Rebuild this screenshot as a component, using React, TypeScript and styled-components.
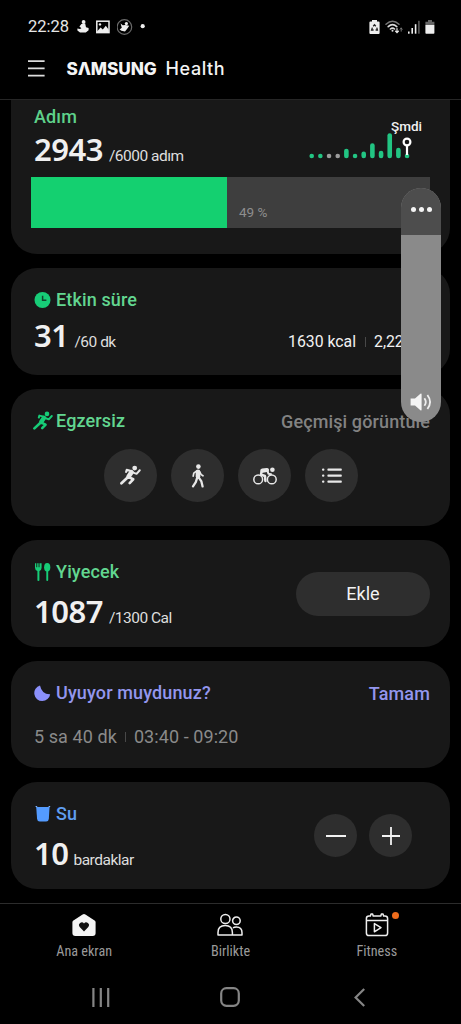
import React from 'react';
import styled, { createGlobalStyle } from 'styled-components';

const GlobalStyle = createGlobalStyle`
  * { box-sizing: border-box; }
  body { margin: 0; background: #000; }
  svg { display: block; flex: none; }
`;

const Screen = styled.div`
  position: relative;
  width: 461px;
  height: 1024px;
  display: flex;
  flex-direction: column;
  overflow: hidden;
  background: #000;
  color: #f2f2f2;
  font-family: Roboto, "Liberation Sans", sans-serif;
`;

const StatusBar = styled.div`
  height: 40px;
  padding: 13px 26px 0 28px;
  display: flex;
  justify-content: space-between;
`;

const StatusGroup = styled.div<{ $gap: number }>`
  height: 27px;
  display: flex;
  align-items: center;
  gap: ${(p) => p.$gap}px;
`;

const Clock = styled.span`
  font-size: 16.5px;
  line-height: 27px;
  color: #e6e6e6;
  margin-right: 1px;
`;

const Header = styled.header`
  height: 60px;
  flex: none;
  padding: 0 28px 2px;
  display: flex;
  align-items: center;
  border-bottom: 1px solid #262626;
`;

const Brand = styled.h1`
  margin: 0 0 0 21.5px;
  display: flex;
  gap: 9px;
  line-height: 24px;
  color: #f4f4f4;
`;

const BrandName = styled.span`
  font: 800 17.2px/24px Inter, sans-serif;
  letter-spacing: -0.1px;
`;

const BrandProduct = styled.span`
  font: 500 18px/24px Inter, sans-serif;
  letter-spacing: 0.6px;
`;

const Feed = styled.main`
  height: 803px;
  flex: none;
  padding: 0 11px;
  display: flex;
  flex-direction: column;
  gap: 14px;
`;

const Card = styled.section<{ $height: number; $first?: boolean }>`
  height: ${(p) => p.$height}px;
  flex: none;
  padding: ${(p) => (p.$first ? '5px 20px 0' : '20px 20px 0 23px')};
  border-radius: ${(p) => (p.$first ? '0 0 26px 26px' : '26px')};
  background: #181818;
`;

const Row = styled.div`
  display: flex;
  justify-content: space-between;
  align-items: flex-start;
`;

const StepsSummary = styled.div`
  padding-left: 3px;
`;

const Title = styled.h2<{ $color: string }>`
  margin: 0;
  display: flex;
  align-items: center;
  gap: 5px;
  font-size: 18px;
  font-weight: 500;
  line-height: 24px;
  letter-spacing: 0.13px;
  color: ${(p) => p.$color};
`;

const TitleIcon = styled.span`
  width: 17px;
  height: 22px;
  display: flex;
  align-items: center;
  justify-content: center;
  color: #17cc77;
`;

const Metric = styled.div<{ $top: number; $gap?: number }>`
  margin-top: ${(p) => p.$top}px;
  height: 36px;
  display: flex;
  align-items: baseline;
  gap: ${(p) => p.$gap ?? 6}px;
`;

const MetricValue = styled.span`
  font: 560 31px/36px "Noto Sans", sans-serif;
  letter-spacing: -0.5px;
  color: #f0f0f0;
`;

const MetricUnit = styled.span`
  font-size: 15.5px;
  letter-spacing: -0.5px;
  color: #dedede;
`;

const HourlyChart = styled.div`
  width: 121px;
  margin-top: 14px;
  display: flex;
  flex-direction: column;
`;

const ChartLabel = styled.span`
  align-self: flex-end;
  margin-right: 8px;
  font-size: 13.5px;
  font-weight: 500;
  line-height: 14px;
  color: #f2f2f2;
`;

const Progress = styled.div`
  margin-top: 10px;
  height: 51px;
  display: flex;
  background: #3e3e3e;
`;

const ProgressFill = styled.div`
  width: 196px;
  background: #14d070;
`;

const ProgressLabel = styled.span`
  margin: 26px 0 0 12px;
  font-size: 13.5px;
  line-height: 18px;
  color: #8e8e8e;
`;

const ActiveStats = styled.div`
  margin-top: 20px;
  display: flex;
  align-items: center;
  font-size: 15.8px;
  line-height: 20px;
  color: #f2f2f2;
`;

const Distance = styled.span`
  width: 56px;
`;

const Divider = styled.span<{ $margin: string }>`
  width: 1px;
  height: 10px;
  margin: ${(p) => p.$margin};
  background: #484848;
`;

const TextAction = styled.button<{ $color: string }>`
  margin: 1px 0 0;
  padding: 0;
  border: 0;
  background: none;
  font: 500 18px/24px Roboto, sans-serif;
  letter-spacing: 0.12px;
  color: ${(p) => p.$color};
`;

const ExerciseRow = styled.div`
  margin: 15px 0 0 70px;
  display: flex;
  gap: 14px;
`;

const RoundButton = styled.button<{ $size: number }>`
  width: ${(p) => p.$size}px;
  height: ${(p) => p.$size}px;
  padding: 0;
  border: 0;
  border-radius: 50%;
  display: flex;
  align-items: center;
  justify-content: center;
  background: #2e2e2e;
  color: #e8e8e8;
`;

const PillButton = styled.button`
  width: 134px;
  height: 44px;
  margin-top: 12px;
  padding: 0;
  border: 0;
  border-radius: 22px;
  background: #2e2e2e;
  color: #f2f2f2;
  font: 400 18px/42px Roboto, sans-serif;
`;

const SleepDetails = styled.div`
  margin-top: 19px;
  display: flex;
  align-items: center;
  font-size: 18px;
  line-height: 24px;
  letter-spacing: 0.08px;
  color: #8a8a8a;
`;

const Stepper = styled.div`
  margin: 12px 18px 0 0;
  display: flex;
  gap: 12px;
`;

const TabBar = styled.nav`
  height: 67px;
  flex: none;
  padding: 0 11px;
  display: grid;
  grid-template-columns: repeat(3, 1fr);
  border-top: 1px solid #2c2c2c;
`;

const Tab = styled.div`
  display: flex;
  flex-direction: column;
  align-items: center;
  padding-top: 9px;
`;

const TabIcon = styled.div`
  position: relative;
`;

const TabLabel = styled.span`
  margin-top: 5px;
  font-size: 14.2px;
  line-height: 18px;
  font-stretch: 75%;
  color: #9a9a9a;
`;

const Badge = styled.span`
  position: absolute;
  top: -1px;
  right: -10px;
  width: 7px;
  height: 7px;
  border-radius: 50%;
  background: #ee6c1c;
`;

const SystemNav = styled.div`
  height: 54px;
  padding: 0 36px;
  display: grid;
  grid-template-columns: repeat(3, 1fr);
  justify-items: center;
  align-items: center;
`;

const VolumePanel = styled.div`
  position: absolute;
  left: 401px;
  top: 188px;
  width: 40px;
  height: 234px;
  border-radius: 20px;
  overflow: hidden;
  display: flex;
  flex-direction: column;
  background: #8a8a8a;
`;

const VolumeMenu = styled.div`
  height: 47px;
  display: flex;
  align-items: center;
  justify-content: center;
  gap: 3px;
  padding-bottom: 5px;
  background: #4d4d4d;
`;

const MenuDot = styled.span`
  width: 5px;
  height: 5px;
  border-radius: 50%;
  background: #f4f4f4;
`;

const VolumeTrack = styled.div`
  flex: 1;
  display: flex;
  align-items: flex-end;
  justify-content: center;
  padding-bottom: 11px;
`;

const RunnerIcon = ({ size }: { size: number }) => (
  <svg width={size} height={size} viewBox="0 0 20 20" fill="none" stroke="currentColor" strokeLinecap="round" strokeLinejoin="round">
    <circle cx="14" cy="2.9" r="2.3" fill="currentColor" stroke="none" />
    <path d="M11 6.8 8.2 11" strokeWidth="4.4" />
    <path d="M9.8 5.4 6.4 4.6 5.8 6.6" strokeWidth="2" />
    <path d="M12 7 15.8 8.4 18.8 5" strokeWidth="1.9" />
    <path d="M7.2 12 1.4 17.4" strokeWidth="2.6" />
    <path d="M8.8 11.8 12.6 13.6 9.2 17.2" strokeWidth="2.5" />
  </svg>
);

const WalkerIcon = () => (
  <svg width="14" height="24" viewBox="0 0 14 24" fill="none" stroke="currentColor" strokeLinecap="round" strokeLinejoin="round">
    <circle cx="7.4" cy="2.6" r="2.3" fill="currentColor" stroke="none" />
    <path d="M7 7.8V12.6" strokeWidth="4.6" />
    <path d="M5.4 7.2 2.8 9.2 2.2 12.2M8.6 7.6 10.2 10.6 12 11.8" strokeWidth="1.7" />
    <path d="M6.2 13.6 4.8 18.2 2 22.4M8 13.8 10.4 17.4 11.6 22.4" strokeWidth="2.3" />
  </svg>
);

const CyclistIcon = () => (
  <svg width="24" height="18" viewBox="0 0 24 18" fill="none" stroke="currentColor" strokeLinecap="round" strokeLinejoin="round">
    <circle cx="5.2" cy="12.4" r="4.4" strokeWidth="1.5" />
    <circle cx="18.8" cy="12.4" r="4.4" strokeWidth="1.5" />
    <circle cx="19.4" cy="2.7" r="2.3" fill="currentColor" stroke="none" />
    <path d="M14 3 9.4 3.6" strokeWidth="4.2" />
    <path d="M8.6 4.4 8 7.6 12 9 12.4 14" strokeWidth="2.5" />
    <path d="M14.6 4 15.4 6.8 18 7.2" strokeWidth="2" />
  </svg>
);

const ListIcon = () => (
  <svg width="20" height="16" viewBox="0 0 20 16" fill="currentColor">
    {[0.4, 6.4, 12.4].map((y) => (
      <React.Fragment key={y}>
        <rect x="0" y={y} width="2.4" height="2.4" rx="1" />
        <rect x="5.4" y={y} width="14.4" height="2.4" rx="0.8" />
      </React.Fragment>
    ))}
  </svg>
);

const BARS = [4.6, 4.6, 4.6, 4.6, 9.5, 4.6, 6.8, 15, 7.6, 25, 10.6, 4.6];

const HourlyBars = () => (
  <svg width="121" height="30" viewBox="0 0 121 30">
    {BARS.map((h, i) => (
      <rect
        key={i}
        x={0.4 + i * 8.67}
        y={25.3 - h}
        width="4.6"
        height={h}
        rx="2.3"
        fill={i === 2 || i === 3 ? '#9c9c9c' : '#22c583'}
      />
    ))}
    <path d="M98 12.5V22" stroke="#fff" strokeWidth="2.2" />
    <circle cx="98" cy="9" r="3.4" fill="#181818" stroke="#fff" strokeWidth="2.2" />
  </svg>
);

export default function App() {
  return (
    <>
      <GlobalStyle />
      <Screen>
        <StatusBar>
          <StatusGroup $gap={7}>
            <Clock>22:28</Clock>
            <svg width="12" height="13" viewBox="0 0 12 13" fill="#eee">
              <circle cx="6.6" cy="2" r="1.9" />
              <path d="M4.4 4 8.2 3.6 9 7.2 11.6 8v2.2L8.8 12.6H3L.4 10.4v-2l2.6.6 1.4-.8L2.4 6.4z" />
            </svg>
            <svg width="14" height="14" viewBox="0 0 14 14" fill="none">
              <rect x=".8" y="1.2" width="12.2" height="11.4" stroke="#eee" strokeWidth="1.5" />
              <path d="M1 11.6 4.6 7.4l2.2 2 3-3.6 3 4V12.4H1z" fill="#eee" />
              <circle cx="4" cy="4.4" r="1.2" fill="#eee" />
            </svg>
            <svg width="16" height="16" viewBox="0 0 16 16" fill="none">
              <circle cx="7.4" cy="8" r="7.3" stroke="#6a6a6a" strokeWidth="1.2" />
              <circle cx="9.4" cy="4.6" r="1.6" fill="#eee" />
              <path d="M3.6 4.4 5.8 6.2 8.2 6 12.2 6.8 10.4 9.6 8 12.6 4.4 11.8 2.6 10.4 4.8 8.8z" fill="#eee" />
            </svg>
            <svg width="5" height="5" viewBox="0 0 5 5">
              <circle cx="2.7" cy="2.2" r="2.1" fill="#eee" />
            </svg>
          </StatusGroup>
          <StatusGroup $gap={5}>
            <svg width="11" height="14" viewBox="0 0 11 14">
              <path d="M3 0h5v1.6h1.6Q10.6 1.6 10.6 2.6V13q0 1-1 1H1.4q-1 0-1-1V2.6q0-1 1-1H3z" fill="#eee" />
              <path d="M4.2 6.2 5.5 4.8 6.8 6.2M7.8 7.6 8.4 10H6.6M4.6 10H2.6L3.4 7.6" fill="none" stroke="#222" strokeWidth="1.3" />
            </svg>
            <svg width="18" height="14" viewBox="0 0 18 14" fill="none" strokeLinecap="round">
              <path d="M1 4.2Q7.5-1.8 14 4.2" stroke="#777" strokeWidth="1.5" />
              <path d="M3.2 6.7Q7.5 2.6 11.8 6.7" stroke="#ddd" strokeWidth="1.6" />
              <path d="M5.4 9Q7.5 7.2 9.6 9" stroke="#ddd" strokeWidth="1.6" />
              <circle cx="7.5" cy="10.8" r="1" fill="#ddd" />
              <path d="M12 8.6v4m-1.5-1.5L12 12.6l1.5-1.5" stroke="#eee" strokeWidth="1.2" />
              <path d="M16.2 11.2V8m-1 1.2 1-1.2 1 1.2" stroke="#777" strokeWidth="1" />
            </svg>
            <svg width="12" height="14" viewBox="0 0 12 14">
              <rect x="0" y="11.5" width="1.6" height="2.2" fill="#eee" />
              <rect x="3.4" y="8" width="1.6" height="5.7" fill="#eee" />
              <rect x="6.8" y="4.2" width="1.6" height="9.5" fill="#eee" />
              <rect x="10.2" y=".8" width="1.4" height="12.9" fill="#666" />
            </svg>
            <svg width="10" height="14" viewBox="0 0 10 14">
              <path d="M3 0h4v1.8h2.4V5H.4V1.8H3z" fill="#666" />
              <path d="M.4 5h9v8q0 .8-.8.8H1.2q-.8 0-.8-.8z" fill="#eee" />
            </svg>
          </StatusGroup>
        </StatusBar>

        <Header>
          <svg width="17" height="17" viewBox="0 0 17 17" stroke="#ddd" strokeWidth="1.7">
            <path d="M0 1.2H16.6M0 8.4H16.6M0 15.6H16.6" />
          </svg>
          <Brand>
            <BrandName>SΛMSUNG</BrandName>
            <BrandProduct>Health</BrandProduct>
          </Brand>
        </Header>

        <Feed>
          <Card $height={154} $first>
            <Row>
              <StepsSummary>
                <Title $color="#5ed18a">Adım</Title>
                <Metric $top={2}>
                  <MetricValue>2943</MetricValue>
                  <MetricUnit>/6000 adım</MetricUnit>
                </Metric>
              </StepsSummary>
              <HourlyChart>
                <ChartLabel>Şmdi</ChartLabel>
                <HourlyBars />
              </HourlyChart>
            </Row>
            <Progress>
              <ProgressFill />
              <ProgressLabel>49 %</ProgressLabel>
            </Progress>
          </Card>

          <Card $height={107}>
            <Title $color="#62d690">
              <TitleIcon>
                <svg width="17" height="17" viewBox="0 0 17 17">
                  <circle cx="8.5" cy="8" r="8" fill="#17cc77" />
                  <path d="M8.6 3.8V8.2H12.4" fill="none" stroke="#12452d" strokeWidth="1.5" />
                </svg>
              </TitleIcon>
              Etkin süre
            </Title>
            <Row>
              <Metric $top={5}>
                <MetricValue>31</MetricValue>
                <MetricUnit>/60 dk</MetricUnit>
              </Metric>
              <ActiveStats>
                <span>1630 kcal</span>
                <Divider $margin="0 8px 0 9px" />
                <Distance>2,22</Distance>
              </ActiveStats>
            </Row>
          </Card>

          <Card $height={137}>
            <Row>
              <Title $color="#62d690">
                <TitleIcon>
                  <RunnerIcon size={20} />
                </TitleIcon>
                Egzersiz
              </Title>
              <TextAction $color="#828282">Geçmişi görüntüle</TextAction>
            </Row>
            <ExerciseRow>
              <RoundButton $size={53}><RunnerIcon size={21} /></RoundButton>
              <RoundButton $size={53}><WalkerIcon /></RoundButton>
              <RoundButton $size={53}><CyclistIcon /></RoundButton>
              <RoundButton $size={53}><ListIcon /></RoundButton>
            </ExerciseRow>
          </Card>

          <Card $height={107}>
            <Row>
              <div>
                <Title $color="#62d690">
                  <TitleIcon>
                    <svg width="16" height="18" viewBox="0 0 16 18" fill="currentColor">
                      <path d="M0 .3h1.3v4h.9v-4h1.4v4h.9v-4h1.3L6.6.3v4.5Q6.6 7.4 4.4 8v9.2q0 .8-1 .8t-1-.8V8Q0 7.4 0 4.8z" />
                      <ellipse cx="12.2" cy="4.3" rx="3.1" ry="4.3" />
                      <rect x="11.3" y="7" width="1.9" height="11" rx=".9" />
                    </svg>
                  </TitleIcon>
                  Yiyecek
                </Title>
                <Metric $top={9}>
                  <MetricValue>1087</MetricValue>
                  <MetricUnit>/1300 Cal</MetricUnit>
                </Metric>
              </div>
              <PillButton>Ekle</PillButton>
            </Row>
          </Card>

          <Card $height={107}>
            <Row>
              <Title $color="#9396ee">
                <TitleIcon>
                  <svg width="17" height="17" viewBox="0 0 17 17" fill="#8b90fa">
                    <path d="M6 .4A8 8 0 1 0 16.2 9.2Q8 9.6 6 .4Z" />
                  </svg>
                </TitleIcon>
                Uyuyor muydunuz?
              </Title>
              <TextAction $color="#9396ee">Tamam</TextAction>
            </Row>
            <SleepDetails>
              <span>5 sa 40 dk</span>
              <Divider $margin="0 8px" />
              <span>03:40 - 09:20</span>
            </SleepDetails>
          </Card>

          <Card $height={107}>
            <Row>
              <div>
                <Title $color="#5f9df0">
                  <TitleIcon>
                    <svg width="16" height="16" viewBox="0 0 16 16">
                      <path d="M1.2 1H14.6L13.8 13Q13.5 15.6 11.2 15.6H4.7Q2.4 15.6 2.1 13Z" fill="#549bff" />
                      <path d="M.6 .5H2.2M13.6 .5H15.2" stroke="#7fb2fb" strokeWidth="1" />
                    </svg>
                  </TitleIcon>
                  Su
                </Title>
                <Metric $top={9} $gap={5}>
                  <MetricValue>10</MetricValue>
                  <MetricUnit>bardaklar</MetricUnit>
                </Metric>
              </div>
              <Stepper>
                <RoundButton $size={43}>
                  <svg width="20" height="20" viewBox="0 0 20 20" stroke="#f2f2f2" strokeWidth="2"><path d="M0 10H20" /></svg>
                </RoundButton>
                <RoundButton $size={43}>
                  <svg width="20" height="20" viewBox="0 0 20 20" stroke="#f2f2f2" strokeWidth="1.8"><path d="M1 10H19M10 1V19" /></svg>
                </RoundButton>
              </Stepper>
            </Row>
          </Card>
        </Feed>

        <TabBar>
          <Tab>
            <TabIcon>
              <svg width="24" height="24" viewBox="0 0 24 24">
                <path d="M10.6 1.4Q12 .5 13.4 1.4L22.6 7.6Q23.6 8.3 23.6 9.5V20Q23.6 23 20.6 23H3.4Q.4 23 .4 20V9.5Q.4 8.3 1.4 7.6Z" fill="#f4f4f4" />
                <path d="M12 18.4 7.7 14A2.7 2.7 0 0 1 12 10.5 2.7 2.7 0 0 1 16.3 14Z" fill="#111" />
              </svg>
            </TabIcon>
            <TabLabel>Ana ekran</TabLabel>
          </Tab>
          <Tab>
            <TabIcon>
              <svg width="26" height="24" viewBox="0 0 26 24" fill="none" stroke="#eee" strokeWidth="1.5" strokeLinejoin="round">
                <circle cx="8.4" cy="6" r="4.6" />
                <circle cx="19.4" cy="7.8" r="3.8" />
                <path d="M1 22V19.4Q1 12.6 8.2 12.6T15.4 19.4V22ZM16 14.8Q17.2 14 19.4 14 25 14 25 19.8V22H15.4" />
              </svg>
            </TabIcon>
            <TabLabel>Birlikte</TabLabel>
          </Tab>
          <Tab>
            <TabIcon>
              <svg width="24" height="24" viewBox="0 0 24 24" fill="none" stroke="#eee" strokeWidth="1.5" strokeLinejoin="round">
                <path d="M1.4 7V20Q1.4 22.6 4 22.6H20Q22.6 22.6 22.6 20V7M1.4 7.4H22.6M1.4 7.4V5.4Q1.4 3 4 3H5.4L6 1H7.6L8.2 3H15.8L16.4 1H18L18.6 3H20Q22.6 3 22.6 5.4V7.4" />
                <path d="M9.4 10.6V18.8L16 14.7Z" />
              </svg>
              <Badge />
            </TabIcon>
            <TabLabel>Fitness</TabLabel>
          </Tab>
        </TabBar>

        <SystemNav>
          <svg width="18" height="19" viewBox="0 0 18 19" stroke="#858585" strokeWidth="2.2"><path d="M1.4 0V19M8.8 0V19M16.2 0V19" /></svg>
          <svg width="20" height="20" viewBox="0 0 20 20" fill="none" stroke="#858585" strokeWidth="2.2"><rect x="1.2" y="1.2" width="17.6" height="17.6" rx="5.2" /></svg>
          <svg width="13" height="19" viewBox="0 0 13 19" fill="none" stroke="#858585" strokeWidth="2.2"><path d="M10.2 1 1.6 9.5 10.2 18" /></svg>
        </SystemNav>

        <VolumePanel>
          <VolumeMenu>
            <MenuDot />
            <MenuDot />
            <MenuDot />
          </VolumeMenu>
          <VolumeTrack>
            <svg width="22" height="18" viewBox="0 0 22 18" fill="none">
              <path d="M.6 5.4H5L10.4.8Q11.6 0 11.6 1.4V16.6Q11.6 18 10.4 17.2L5 12.6H.6z" fill="#f4f4f4" />
              <path d="M14.4 5.2Q17.2 9 14.4 12.8M17.4 2Q22.8 9 17.4 16" stroke="#eee" strokeWidth="1.8" />
            </svg>
          </VolumeTrack>
        </VolumePanel>
      </Screen>
    </>
  );
}
